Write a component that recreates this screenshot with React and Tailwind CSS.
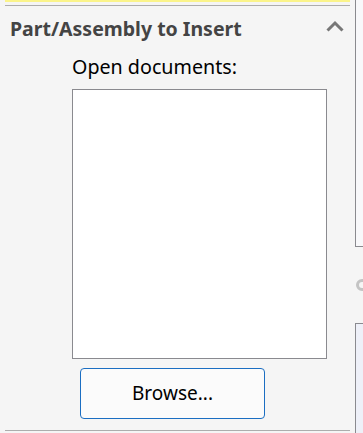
import React from "react";

const FONT = { fontFamily: '"Noto Sans", "Open Sans", sans-serif' };

function ChevronUp() {
  return (
    <svg width="18" height="12" viewBox="0 0 18 12" className="block">
      <path d="M1.5 10.5 L9 3 L16.5 10.5" fill="none" stroke="#777" strokeWidth="3" />
    </svg>
  );
}

export default function App() {
  return (
    <div className="w-[363px] h-[433px] bg-[#f5f5f5] flex overflow-hidden" style={FONT}>
      {/* property panel */}
      <div className="w-[357px] flex flex-col px-[5px]">
        <div className="w-[345px] h-[2px] bg-[#fbf48a]" />
        <div className="w-[345px] h-px bg-[#adadad] mt-[3px]" />
        <div className="flex items-start justify-between pl-[5px] pr-[6px] h-[33px]">
          <span className="mt-[13px] text-[19.5px] font-bold text-[#444] leading-none">Part/Assembly to Insert</span>
          <div className="mt-[14px]">
            <ChevronUp />
          </div>
        </div>
        <div className="pl-[67px] mt-[18px] h-[20px] text-[19.7px] text-black leading-none">Open documents:</div>
        <div className="ml-[67px] mt-[12px] w-[255px] h-[270px] bg-white border border-[#8a8a8f]" />
        <button className="ml-[75px] mt-[9px] w-[185px] h-[51px] rounded-[4px] border border-[#1b6ec2] bg-[#fbfbfb] text-[19px] text-black leading-none">
          Browse...
        </button>
        <div className="w-[345px] h-px bg-[#adadad] mt-[11px]" />
      </div>
      {/* right edge */}
      <div className="flex-1 flex flex-col">
        <div className="h-[247px] border-l border-b border-[#8a8a8f] bg-[#f8f8fa]" />
        <div className="h-[76px] flex items-center">
          <div className="w-[12px] h-[12px] shrink-0 rounded-full border-[3px] border-[#c4c4c4] ml-[1px]" />
        </div>
        <div className="flex-1 border-l border-t border-[#8a8a8f] bg-[#eef0f8]" />
      </div>
    </div>
  );
}
